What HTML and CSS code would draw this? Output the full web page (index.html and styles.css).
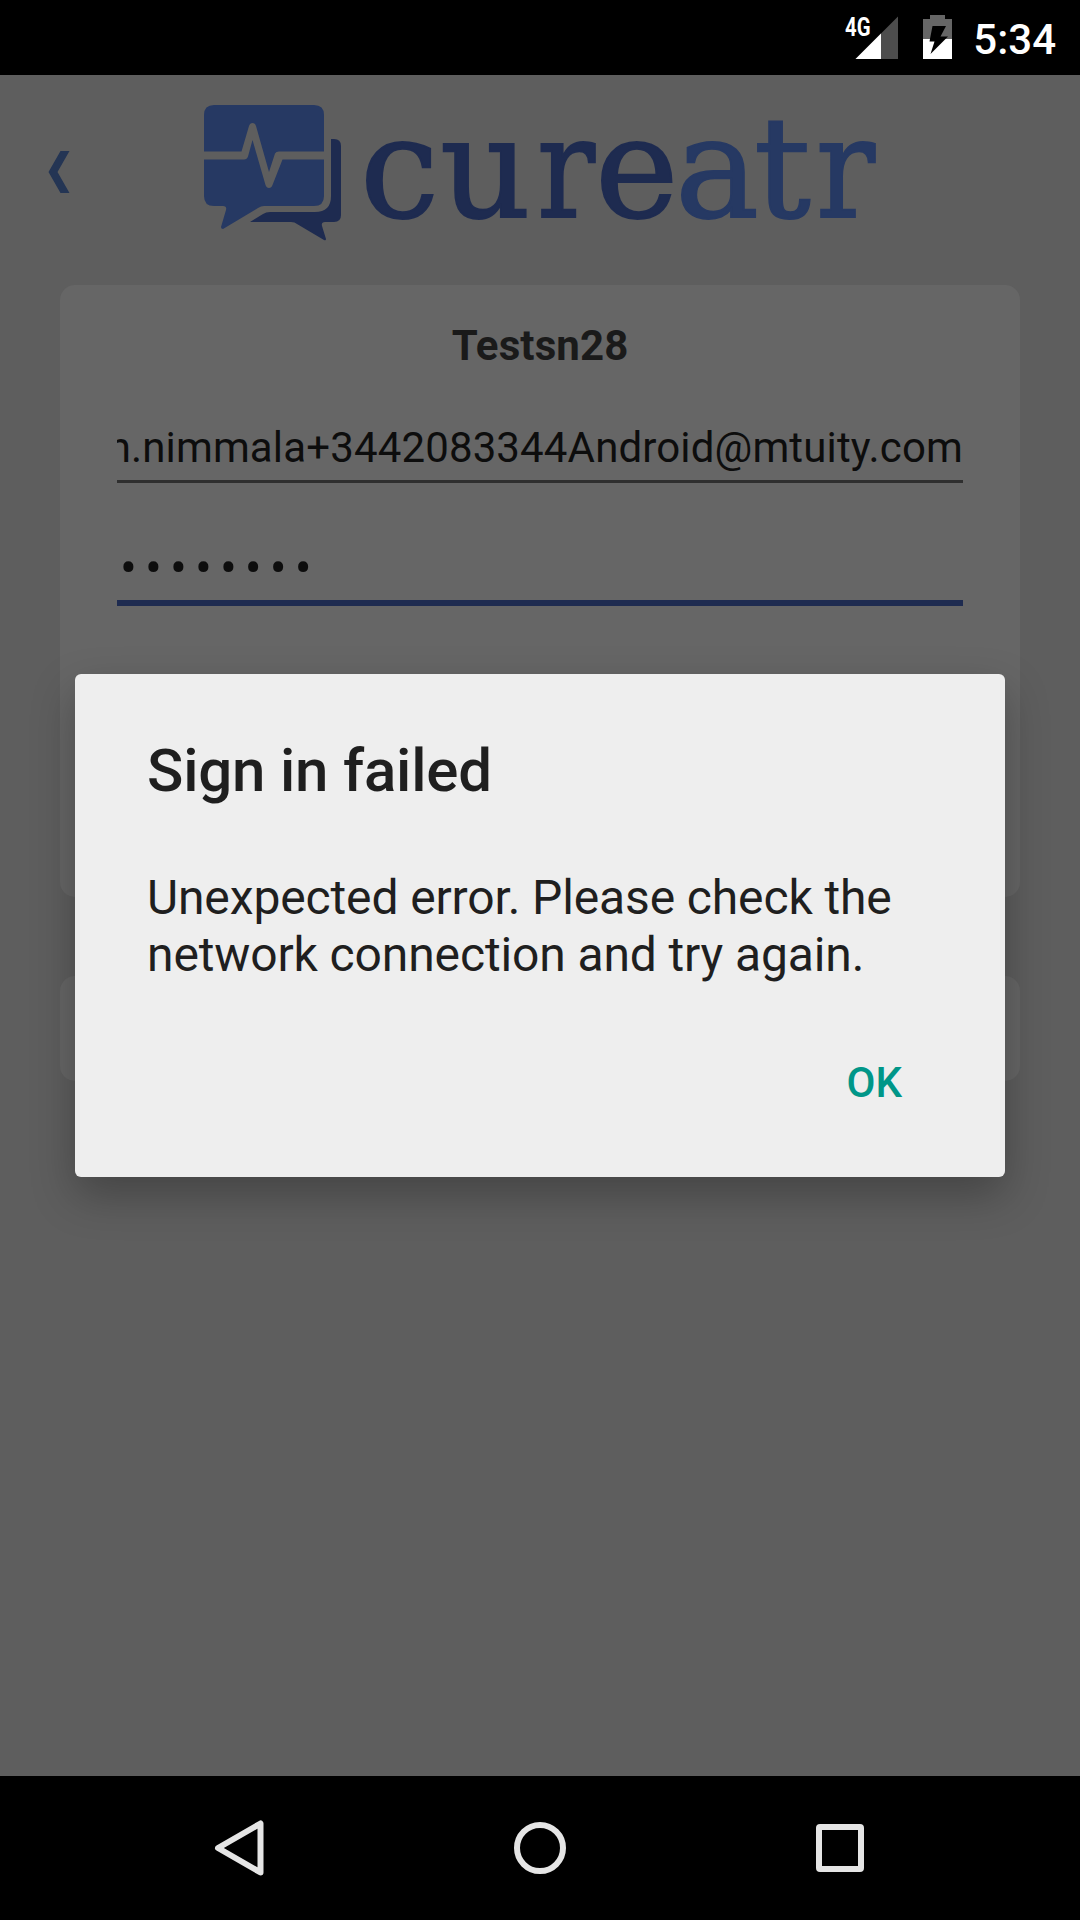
FILE: index.html
```html
<!DOCTYPE html>
<html lang="en">
<head>
<meta charset="utf-8">
<title>Sign in</title>
<link rel="stylesheet" href="styles.css">
</head>
<body>
<div class="screen">
  <header class="status-bar">
    <svg class="signal" width="54" height="75" viewBox="844 0 54 75">
      <path d="M898 16.500V59H855.500Z" fill="#4d4d4d"/>
      <path d="M881 33.500V59H855.500Z" fill="#fff"/>
      <text x="845" y="35.500" class="network" textLength="25.500" lengthAdjust="spacingAndGlyphs">4G</text>
    </svg>
    <svg class="battery" width="29" height="75" viewBox="923 0 29 75">
      <path d="M923 19h7v-4h15v4h7v20h-29z" fill="#666"/>
      <path d="M923 39h29v20h-29z" fill="#fff"/>
      <path d="M932.500 26H946L940.500 36.500H948L930.500 54L934.500 41.500H929.500Z" fill="#000"/>
    </svg>
    <span class="clock">5:34</span>
  </header>
  <main class="app">
    <div class="brand">
      <svg class="back" width="22" height="44" viewBox="48 150 22 44">
        <path d="M60.500 151H69.500L57.500 172L69.500 193H60.500L48.500 172Z"/>
      </svg>
      <svg class="logo" width="680" height="150" viewBox="200 100 680 150">
        <path class="navy" d="M331 139h3q7 0 7 7v69q0 7-7 7h-9q-4 0-3 4l4 13q0 2-2 1l-27-16q-2-2-6-2h-41l13-8q3-2 7-2h45q16 0 16-16z"/>
        <path class="blue" d="M204 151.500V115q0-10 10-10H314q10 0 10 10V151.500H279q-3 0-4 2L269 172L256 126q-1-3-3.500-3t-3.500 3L241.500 151.500Z"/>
        <path class="blue" d="M204 159.500H244q3 0 4-3L252.500 140L265.500 185q1 3 3.500 3t3.500-3L282.500 159.500H324V196q0 10-10 10H264q-3 0-6 2L223 229q-2 0-2-2L226 210q1-4-3-4H214q-10 0-10-10Z"/>
        <text class="wordmark navy-text" y="217"><tspan x="360">c</tspan><tspan x="440">u</tspan><tspan x="537" textLength="58" lengthAdjust="spacingAndGlyphs">r</tspan><tspan x="595">e</tspan></text>
        <text class="wordmark blue-text" y="217"><tspan x="675">a</tspan><tspan x="754">t</tspan><tspan x="816" textLength="59" lengthAdjust="spacingAndGlyphs">r</tspan></text>
      </svg>
    </div>
    <section class="card sign-in">
      <h1 class="account">Testsn28</h1>
      <div class="field email"><span>n.nimmala+3442083344Android@mtuity.com</span></div>
      <div class="field password"><span>••••••••</span></div>
    </section>
    <section class="card secondary"></section>
  </main>
  <nav class="nav-bar">
    <svg width="60" height="60" viewBox="0 0 60 60"><path d="M50.500 5.500V54.500L8 30Z"/></svg>
    <svg width="60" height="60" viewBox="0 0 60 60"><circle cx="30" cy="30" r="23"/></svg>
    <svg width="60" height="60" viewBox="0 0 60 60"><rect x="9" y="9" width="42" height="42" rx="1"/></svg>
  </nav>
  <div class="dialog" role="alertdialog">
    <h2 class="dialog-title">Sign in failed</h2>
    <p class="dialog-text">Unexpected error. Please check the<br>network connection and try again.</p>
    <button class="dialog-ok">OK</button>
  </div>
</div>
</body>
</html>
```
FILE: styles.css
```css
* { box-sizing: border-box; }
body { margin: 0; font-family: Roboto, sans-serif; }
h1, h2, p { margin: 0; }
svg { display: block; flex: none; }
.screen {
  position: relative;
  width: 1080px;
  height: 1920px;
  display: flex;
  flex-direction: column;
  overflow: hidden;
  background: #5e5e5e;
}
.status-bar {
  height: 75px;
  background: #000;
  color: #fff;
  display: flex;
  justify-content: flex-end;
  align-items: center;
  padding-right: 24px;
}
.network { font: 700 26px Roboto, sans-serif; fill: #fff; }
.battery { margin: 0 21px 0 25px; }
.clock { font-size: 42px; font-weight: 500; line-height: 75px; padding-top: 4px; }
.app { flex: 1; padding: 25px 60px 0; }
.brand { display: flex; height: 185px; margin: 0 -12px; }
.back { margin: 50px 130px 0 0; fill: #243554; }
.navy { fill: #1e2b50; }
.blue { fill: #263963; }
.logo { overflow: visible; }
.wordmark { font-family: "DejaVu Serif", serif; font-size: 141px; stroke-width: 2px; }
.navy-text { fill: #1e2b50; stroke: #1e2b50; }
.blue-text { fill: #263963; stroke: #263963; }
.card { background: #666; border-radius: 15px; }
.sign-in { height: 612px; padding: 36px 57px 0; }
.account {
  font-size: 42px;
  line-height: 50px;
  font-weight: 700;
  letter-spacing: 0.1px;
  text-align: center;
  color: #1a1a1a;
}
.field { display: flex; font-size: 42px; line-height: 50px; color: #0d0d0d; }
.email {
  margin-top: 52px;
  height: 60px;
  overflow: hidden;
  justify-content: flex-end;
  white-space: nowrap;
  letter-spacing: 0.14px;
  border-bottom: 3px solid #2f2f2f;
}
.password {
  margin-top: 60px;
  height: 63px;
  padding-left: 3px;
  border-bottom: 6px solid #1e2b50;
  font-size: 50px;
  letter-spacing: 8.1px;
}
.secondary { margin-top: 79px; height: 105px; }
.nav-bar {
  height: 144px;
  background: #000;
  display: flex;
  justify-content: space-between;
  align-items: center;
  padding: 0 210px;
}
.nav-bar svg { fill: none; stroke: #e5e5e5; stroke-width: 6; stroke-linejoin: round; }
.dialog {
  position: absolute;
  left: 75px;
  top: 674px;
  width: 930px;
  height: 503px;
  padding: 61px 72px 0;
  border-radius: 6px;
  background: #eee;
  color: #1f1f1f;
  display: flex;
  flex-direction: column;
  box-shadow: 0 18px 44px rgba(0, 0, 0, 0.28);
}
.dialog-title { font-size: 60px; line-height: 72px; font-weight: 500; letter-spacing: -0.2px; }
.dialog-text { margin-top: 62px; font-size: 48px; line-height: 57px; letter-spacing: -0.13px; }
.dialog-ok {
  align-self: flex-end;
  margin: 75px 31px 0 0;
  padding: 0;
  border: 0;
  background: none;
  font: 500 42px/50px Roboto, sans-serif;
  color: #009688;
}
```
